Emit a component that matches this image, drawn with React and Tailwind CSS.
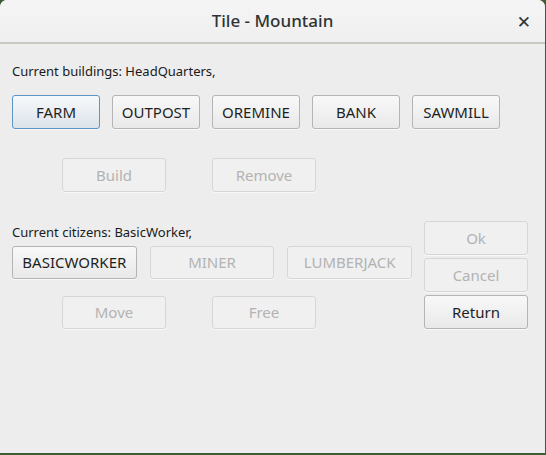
import React from "react";

const FONT = { fontFamily: '"Noto Sans", "DejaVu Sans", sans-serif' };

// Gtk-like push button. variant: normal | focused | disabled
function Btn({ label, className = "", variant = "normal" }) {
  const look = {
    normal: "border-[#b4b4b4] bg-gradient-to-b from-[#f8f8f8] to-[#e9e9e9] text-[#1f1f1f]",
    focused: "border-[#5f95c4] bg-gradient-to-b from-[#f7f9fb] to-[#dbe3ea] text-[#1f1f1f]",
    disabled: "border-[#d6d6d6] bg-[#f0f0f0] text-[#b3b3b3]",
  }[variant];
  return (
    <div
      className={`flex items-center justify-center rounded-[3px] border text-[15px] leading-none shadow-[0_1px_0_rgba(255,255,255,0.6)] ${look} ${className}`}
    >
      {label}
    </div>
  );
}

const BUILDINGS = ["FARM", "OUTPOST", "OREMINE", "BANK", "SAWMILL"];

export default function App() {
  return (
    <div className="w-[546px] h-[455px] bg-[#3d5c33]" style={FONT}>
      <div className="w-[545px] h-[453px] bg-[#ededed] rounded-t-[7px] overflow-hidden flex flex-col">
        {/* Title bar */}
        <div className="h-[44px] shrink-0 flex items-center justify-center relative bg-gradient-to-b from-[#f5f5f5] to-[#efefef] border-b-2 border-b-[#c9c9c4]">
          <span className="text-[17px] font-medium text-[#2e3436]">Tile - Mountain</span>
          <span className="absolute right-[14px] top-[13px] text-[17px] font-bold text-[#2e3436] leading-none">✕</span>
        </div>

        {/* Body */}
        <div className="flex flex-col pl-[12px]">
          <div className="mt-[19px] text-[13px] leading-[17px] text-[#1a1a1a]">
            Current buildings: HeadQuarters,
          </div>

          <div className="mt-[15px] flex gap-[12px]">
            {BUILDINGS.map((b, i) => (
              <Btn key={b} label={b} variant={i === 0 ? "focused" : "normal"} className="w-[88px] h-[34px]" />
            ))}
          </div>

          <div className="mt-[29px] ml-[50px] flex gap-[46px]">
            <Btn label="Build" variant="disabled" className="w-[104px] h-[34px]" />
            <Btn label="Remove" variant="disabled" className="w-[104px] h-[34px]" />
          </div>

          <div className="mt-[29px] flex gap-[12px]">
            <div className="w-[400px] flex flex-col">
              <div className="mt-[3px] text-[13px] leading-[17px] text-[#1a1a1a]">
                Current citizens: BasicWorker,
              </div>
              <div className="mt-[5px] flex gap-[13px]">
                <Btn label="BASICWORKER" className="w-[125px] h-[33px]" />
                <Btn label="MINER" variant="disabled" className="w-[125px] h-[33px]" />
                <Btn label="LUMBERJACK" variant="disabled" className="w-[125px] h-[33px]" />
              </div>
              <div className="mt-[17px] ml-[50px] flex gap-[46px]">
                <Btn label="Move" variant="disabled" className="w-[104px] h-[33px]" />
                <Btn label="Free" variant="disabled" className="w-[104px] h-[33px]" />
              </div>
            </div>
            <div className="flex flex-col gap-[3px]">
              <Btn label="Ok" variant="disabled" className="w-[104px] h-[34px]" />
              <Btn label="Cancel" variant="disabled" className="w-[104px] h-[34px]" />
              <Btn label="Return" className="w-[104px] h-[34px] border-[#a3a3a3]" />
            </div>
          </div>
        </div>
      </div>
    </div>
  );
}
